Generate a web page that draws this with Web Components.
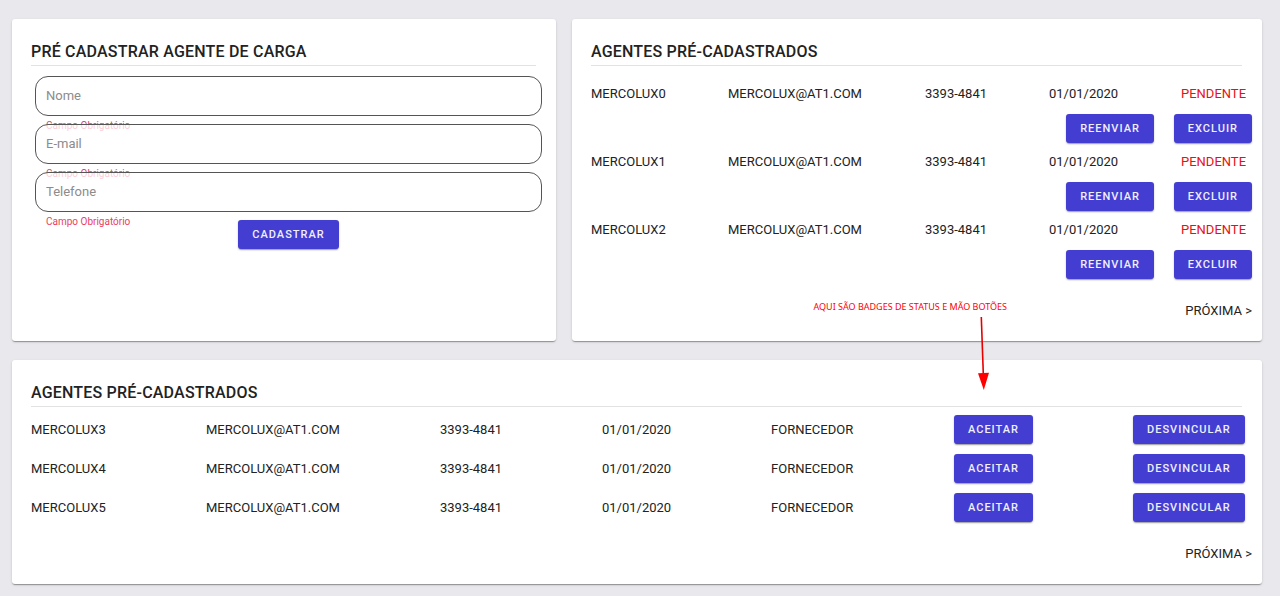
<!DOCTYPE html>
<html lang="pt-BR">
<head>
<meta charset="utf-8">
<title>Agentes de carga</title>
<style>
  body { margin: 0; background: #e8e8ed; color: #222; font: 13px/20px Roboto, sans-serif; }
</style>
</head>
<body>
<agents-page></agents-page>

<script>
const define = (name, html, setup) => {
  const template = document.createElement('template');
  template.innerHTML = html;
  customElements.define(name, class extends HTMLElement {
    constructor() {
      super();
      this.attachShadow({ mode: 'open' }).append(template.content.cloneNode(true));
    }
    connectedCallback() {
      if (setup && !this.ready) { this.ready = true; setup(this, this.shadowRoot); }
    }
  });
};

define('app-button', `
  <style>
    :host { display: inline-block; vertical-align: top; }
    button {
      display: block; height: 29px; padding: 0 14px; border: 0; border-radius: 3px;
      background: #433dd1; color: #f0effc; cursor: pointer; white-space: nowrap;
      font: 500 11px/29px Roboto, sans-serif; letter-spacing: 1px;
      box-shadow: 0 2px 1px -1px rgba(0,0,0,.2), 0 1px 2px rgba(0,0,0,.24);
    }
  </style>
  <button type="button"><slot></slot></button>`);

define('app-card', `
  <style>
    :host {
      display: block; box-sizing: border-box; padding: 23px 10px 20px 19px;
      background: #fff; border-radius: 3px;
      box-shadow: 0 2px 1px -1px rgba(0,0,0,.2), 0 1px 1px rgba(0,0,0,.14), 0 1px 3px rgba(0,0,0,.12);
    }
    h2 {
      margin: 0 10px 8px 0; padding-bottom: 3px; border-bottom: 1px solid #e2e2e2;
      font: 500 16px/20px Roboto, sans-serif; letter-spacing: .0125em;
    }
  </style>
  <h2><slot name="title"></slot></h2>
  <slot></slot>`);

define('text-field', `
  <style>
    :host { display: grid; position: relative; }
    input, label { grid-area: 1 / 1; }
    input {
      box-sizing: border-box; width: 100%; height: 40px; padding: 0 10px;
      border: 1px solid #555; border-radius: 13px; background: rgba(255,255,255,.75);
      color: #222; font: 13px/20px Roboto, sans-serif; outline-color: #433dd1;
    }
    label { align-self: center; padding-left: 11px; color: #8c8c8c; pointer-events: none; position: relative; }
    input:not(:placeholder-shown) + label { visibility: hidden; }
    small { position: absolute; top: 100%; left: 11px; font-size: 10px; line-height: 20px; color: #e9415f; }
  </style>
  <input id="field" placeholder=" " aria-describedby="help" required>
  <label for="field"></label>
  <small id="help">Campo Obrigatório</small>`,
  (host, root) => {
    root.querySelector('label').textContent = host.getAttribute('label');
    root.querySelector('input').type = host.getAttribute('type') || 'text';
  });

define('agent-form', `
  <style>
    :host { display: block; }
    form { display: grid; gap: 8px; padding: 2px 4px 0; }
    app-button { justify-self: center; position: relative; }
  </style>
  <form>
    <text-field label="Nome"></text-field>
    <text-field label="E-mail" type="email"></text-field>
    <text-field label="Telefone" type="tel"></text-field>
    <app-button>CADASTRAR</app-button>
  </form>`);

const tableStyle = `
    :host { display: block; }
    table { width: 100%; table-layout: fixed; border-collapse: collapse; }
    td { padding: 0; white-space: nowrap; }`;

define('pending-agents', `
  <style>${tableStyle}
    :host { padding-top: 1px; }
    .data td { height: 37px; padding-bottom: 2px; }
    .status { color: #e81010; }
    .actions { display: flex; justify-content: flex-end; gap: 20px; }
  </style>
  <table aria-label="Agentes pendentes">
    <colgroup>
      <col style="width:137px"><col style="width:197px"><col style="width:124px"><col style="width:132px"><col style="width:71px">
    </colgroup>
    <tbody></tbody>
  </table>`,
  (host, root) => {
    root.querySelector('tbody').innerHTML = [0, 1, 2].map(n => `
      <tr class="data"><td>MERCOLUX${n}</td><td>MERCOLUX@AT1.COM</td><td>3393-4841</td><td>01/01/2020</td><td class="status">PENDENTE</td></tr>
      <tr><td colspan="5"><div class="actions"><app-button>REENVIAR</app-button><app-button>EXCLUIR</app-button></div></td></tr>`).join('');
  });

define('linked-agents', `
  <style>${tableStyle}
    td { height: 29px; padding-bottom: 10px; }
  </style>
  <table aria-label="Agentes vinculados">
    <colgroup>
      <col style="width:175px"><col style="width:234px"><col style="width:162px"><col style="width:169px"><col style="width:183px"><col style="width:179px"><col style="width:119px">
    </colgroup>
    <tbody></tbody>
  </table>`,
  (host, root) => {
    root.querySelector('tbody').innerHTML = [3, 4, 5].map(n => `
      <tr><td>MERCOLUX${n}</td><td>MERCOLUX@AT1.COM</td><td>3393-4841</td><td>01/01/2020</td><td>FORNECEDOR</td><td><app-button>ACEITAR</app-button></td><td><app-button>DESVINCULAR</app-button></td></tr>`).join('');
  });

define('next-link', `
  <style>
    :host { display: flex; justify-content: flex-end; }
    a { color: inherit; text-decoration: none; }
  </style>
  <a href="#proxima">PRÓXIMA &gt;</a>`);

define('review-note', `
  <style>
    :host { display: block; color: #f00; font: 9px/12px "Noto Sans", sans-serif; white-space: nowrap; pointer-events: none; }
    svg { display: block; margin: 3px 0 0 161px; }
  </style>
  <span>AQUI SÃO BADGES DE STATUS E MÃO BOTÕES</span>
  <svg width="20" height="75" viewBox="0 0 20 75" aria-hidden="true">
    <path d="M7.3 1 9.3 58" stroke="#e60000" stroke-width="1.6"/>
    <path d="M4 57.3 15 56.8 9.8 74Z" fill="#f00"/>
  </svg>`);

define('agents-page', `
  <style>
    :host { display: block; position: relative; padding: 19px 18px 12px 12px; }
    main { display: grid; grid-template-columns: 544fr 690fr; gap: 19px 16px; }
    .wide { grid-column: 1 / -1; }
    .pending next-link { margin-top: 22px; }
    .wide next-link { margin-top: 12px; }
    review-note { position: absolute; top: 301px; right: 273px; }
  </style>
  <main>
    <app-card><span slot="title">PRÉ CADASTRAR AGENTE DE CARGA</span><agent-form></agent-form></app-card>
    <app-card class="pending"><span slot="title">AGENTES PRÉ-CADASTRADOS</span><pending-agents></pending-agents><next-link></next-link></app-card>
    <app-card class="wide"><span slot="title">AGENTES PRÉ-CADASTRADOS</span><linked-agents></linked-agents><next-link></next-link></app-card>
  </main>
  <review-note></review-note>`);
</script>
</body>
</html>
